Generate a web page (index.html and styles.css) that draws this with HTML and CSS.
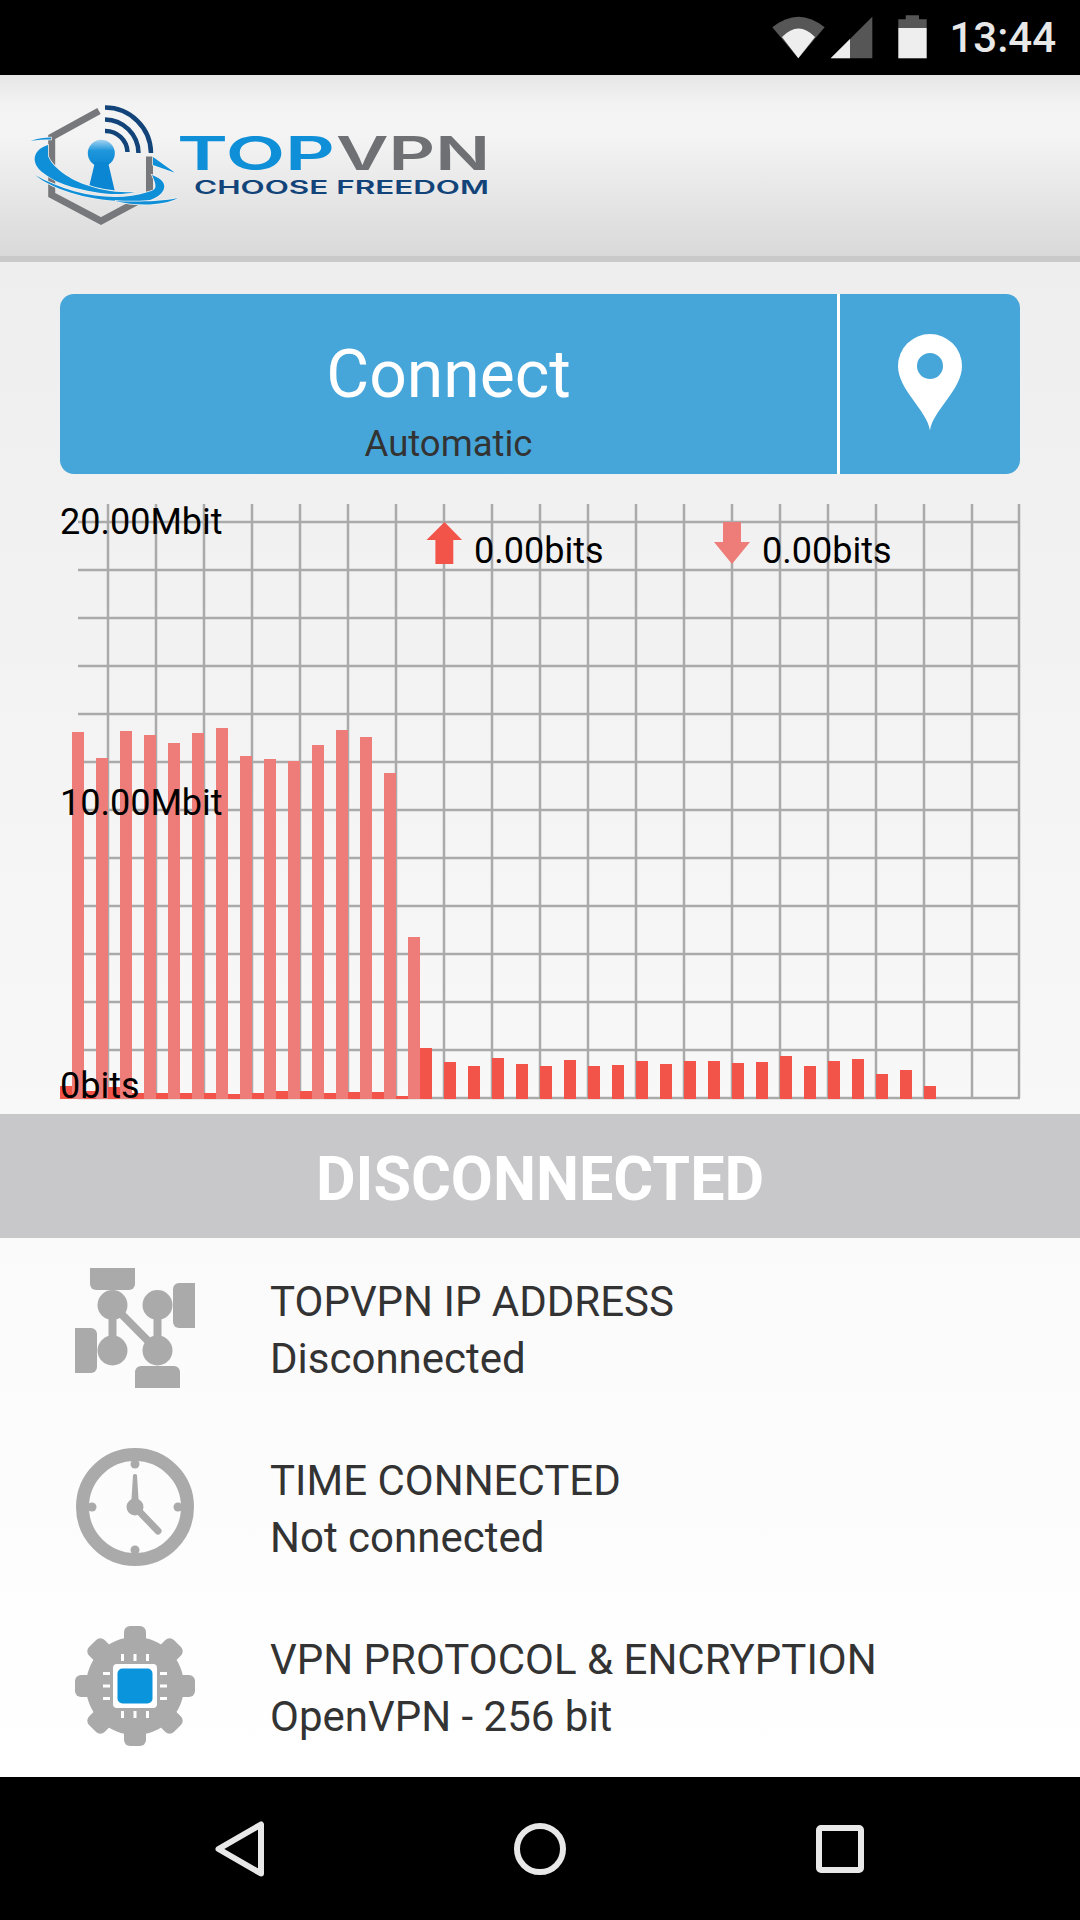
FILE: index.html
```html
<!DOCTYPE html>
<html lang="en">
<head>
  <meta charset="UTF-8">
  <meta name="viewport" content="width=device-width, initial-scale=1.0">
  <title>TopVPN</title>
  <link rel="stylesheet" href="styles.css">
</head>
<body>
  <div class="status">
    <svg class="status-icons" width="160" height="55" viewBox="770 10 160 55">
      <path class="dim" d="M773.3 27.3Q799.5 6 825.7 27.3L799.3 58.3Z"/>
      <path class="lit" d="M783 37Q799.5 20 816 37L799.3 58.3Z"/>
      <path class="dim" d="M831.7 58.3H873.3V16.7Z"/>
      <path class="lit" d="M831.7 58.3H851V39Z"/>
      <path class="dim" d="M906.7 15.3H920V19.3H927.7V28H899.3V19.3H906.7Z"/>
      <path class="lit" d="M899.3 28H927.7V58.3H899.3Z"/>
    </svg>
    <span class="clock">13:44</span>
  </div>

  <header class="topbar">
    <svg class="logo" width="520" height="181" viewBox="0 75 520 181">
      <defs>
        <linearGradient id="keyfill" x1="0" y1="0" x2="0" y2="1">
          <stop offset="0" stop-color="#a5d3f0"/>
          <stop offset="0.4" stop-color="#1f97dc"/>
          <stop offset="1" stop-color="#0a86d2"/>
        </linearGradient>
      </defs>
      <path class="logo-hex" d="M99 111L51.7 137V195L101 221L149.5 195V156.5"/>
      <path class="logo-wave" d="M105 107.5A46 46 0 0 1 151 153M105 119.5A34 34 0 0 1 138.500 153M105 131A22 22 0 0 1 127.500 152"/>
      <circle cx="101.300" cy="153.300" r="13.500" fill="url(#keyfill)"/>
      <path fill="#0a86d2" d="M95 162L89 187L115 192L108 162Z"/>
      <path class="logo-swoosh" d="M30.700 140.700C38 138.500 45 137.500 51 137.500V139.500C44 139.500 37 140 30.700 140.700Z"/>
      <path class="logo-swoosh" d="M48 145C32 150 31 163 42 172C52 180 62 184 72 187C90 192 115 197 135 192C115 193 100 190 83 184C68 178 52 167 48 156Z"/>
      <path class="logo-swoosh" d="M35 175C60 195 110 205 150 200C165 195 172 182 152 175C158 188 156 190 148 192C115 203 70 195 35 175Z"/>
      <path class="logo-swoosh" d="M115 201C140 207 165 205 178 198C160 202 130 202 115 201Z"/>
      <path class="logo-swoosh" d="M153 157L175 172.700L153 165Z"/>
      <text class="logo-top" x="177" y="170" textLength="158" lengthAdjust="spacingAndGlyphs">TOP</text>
      <text class="logo-vpn" x="336" y="170" textLength="154" lengthAdjust="spacingAndGlyphs">VPN</text>
      <text class="logo-sub" x="194" y="194" textLength="295" lengthAdjust="spacingAndGlyphs">CHOOSE FREEDOM</text>
    </svg>
  </header>

  <main class="main">
    <div class="connect">
      <div class="connect-main">
        <span class="connect-title">Connect</span>
        <span class="connect-sub">Automatic</span>
      </div>
      <div class="connect-pin">
        <svg class="pin-svg" width="66" height="98" viewBox="-33 -33 66 98">
          <path class="pin" fill-rule="evenodd" d="M0 64.500C-3 44 -32 24 -32 0A32 32 0 0 1 32 0C32 24 3 44 0 64.500ZM0 -13A13 13 0 0 0 0 13A13 13 0 0 0 0 -13Z"/>
        </svg>
      </div>
    </div>

    <div class="chart">
      <svg class="chart-svg" width="962" height="596" viewBox="60 504 962 596">
        <!-- grid -->
        <path class="grid" d="M78 522H1020M78 570H1020M78 618H1020M78 666H1020M78 714H1020M78 762H1020M78 810H1020M78 858H1020M78 906H1020M78 954H1020M78 1002H1020M78 1050H1020M78 1098H1020"/>
        <path class="grid" d="M108 504V1098M156 504V1098M204 504V1098M252 504V1098M300 504V1098M348 504V1098M396 504V1098M444 504V1098M492 504V1098M540 504V1098M588 504V1098M636 504V1098M684 504V1098M732 504V1098M780 504V1098M828 504V1098M876 504V1098M924 504V1098M972 504V1098M1019 504V1098"/>
        <!-- upload -->
        <g class="bars-up">
          <rect x="72" y="732" width="12" height="367"/>
          <rect x="96" y="758" width="12" height="341"/>
          <rect x="120" y="731" width="12" height="368"/>
          <rect x="144" y="735" width="12" height="364"/>
          <rect x="168" y="743" width="12" height="356"/>
          <rect x="192" y="733" width="12" height="366"/>
          <rect x="216" y="728" width="12" height="371"/>
          <rect x="240" y="756" width="12" height="343"/>
          <rect x="264" y="759" width="12" height="340"/>
          <rect x="288" y="761" width="12" height="338"/>
          <rect x="312" y="745" width="12" height="354"/>
          <rect x="336" y="730" width="12" height="369"/>
          <rect x="360" y="737" width="12" height="362"/>
          <rect x="384" y="773" width="12" height="326"/>
          <rect x="408" y="937" width="12" height="162"/>
        </g>
        <!-- download -->
        <g class="bars-down">
          <rect x="60" y="1086" width="12" height="13"/>
          <rect x="84" y="1091" width="12" height="8"/>
          <rect x="108" y="1087" width="12" height="12"/>
          <rect x="132" y="1093" width="12" height="6"/>
          <rect x="156" y="1093" width="12" height="6"/>
          <rect x="180" y="1093" width="12" height="6"/>
          <rect x="204" y="1093" width="12" height="6"/>
          <rect x="228" y="1094" width="12" height="5"/>
          <rect x="252" y="1093" width="12" height="6"/>
          <rect x="276" y="1091" width="12" height="8"/>
          <rect x="300" y="1091" width="12" height="8"/>
          <rect x="324" y="1093" width="12" height="6"/>
          <rect x="348" y="1092" width="12" height="7"/>
          <rect x="372" y="1092" width="12" height="7"/>
          <rect x="396" y="1096" width="12" height="3"/>
          <rect x="420" y="1048" width="12" height="51"/>
          <rect x="444" y="1062" width="12" height="37"/>
          <rect x="468" y="1066" width="12" height="33"/>
          <rect x="492" y="1058" width="12" height="41"/>
          <rect x="516" y="1064" width="12" height="35"/>
          <rect x="540" y="1066" width="12" height="33"/>
          <rect x="564" y="1060" width="12" height="39"/>
          <rect x="588" y="1066" width="12" height="33"/>
          <rect x="612" y="1065" width="12" height="34"/>
          <rect x="636" y="1061" width="12" height="38"/>
          <rect x="660" y="1064" width="12" height="35"/>
          <rect x="684" y="1061" width="12" height="38"/>
          <rect x="708" y="1061" width="12" height="38"/>
          <rect x="732" y="1063" width="12" height="36"/>
          <rect x="756" y="1062" width="12" height="37"/>
          <rect x="780" y="1056" width="12" height="43"/>
          <rect x="804" y="1066" width="12" height="33"/>
          <rect x="828" y="1061" width="12" height="38"/>
          <rect x="852" y="1059" width="12" height="40"/>
          <rect x="876" y="1074" width="12" height="25"/>
          <rect x="900" y="1070" width="12" height="29"/>
          <rect x="924" y="1086" width="12" height="13"/>
        </g>
        <path class="arrow-up" d="M444.500 522L462 540H453.300V564H435.400V540H426.500Z"/>
        <path class="arrow-down" d="M732 564L750 542H741V522H723V542H714Z"/>
      </svg>
      <span class="axis axis-top">20.00Mbit</span>
      <span class="axis axis-mid">10.00Mbit</span>
      <span class="axis axis-low">0bits</span>
      <span class="axis rate-up">0.00bits</span>
      <span class="axis rate-down">0.00bits</span>
    </div>
  </main>

  <div class="state">DISCONNECTED</div>

  <section class="info">
    <div class="row">
      <svg class="row-icon" width="120" height="120" viewBox="-60 -60 120 120">
        <path class="ico" d="M-45 -60H0V-44a6 6 0 0 1 -6 6H-39a6 6 0 0 1 -6 -6Z"/>
        <path class="ico" d="M60 -45V0H44a6 6 0 0 1 -6 -6V-39a6 6 0 0 1 6 -6Z"/>
        <path class="ico" d="M-60 0H-44a6 6 0 0 1 6 6V39a6 6 0 0 1 -6 6H-60Z"/>
        <path class="ico" d="M0 60V44a6 6 0 0 1 6 -6H39a6 6 0 0 1 6 6V60Z"/>
        <circle class="ico" cx="-22.500" cy="-23" r="15"/>
        <circle class="ico" cx="22.500" cy="-23" r="15"/>
        <circle class="ico" cx="-22.500" cy="22.500" r="15"/>
        <circle class="ico" cx="22.500" cy="22.500" r="15"/>
        <path class="ico-line" d="M-22.500 -23V22.500M22.500 -23V22.500M-22.500 -23L22.500 22.500"/>
      </svg>
      <div class="row-text">
        <div>TOPVPN IP ADDRESS</div>
        <div>Disconnected</div>
      </div>
    </div>
    <div class="row">
      <svg class="row-icon" width="120" height="120" viewBox="-60 -60 120 120">
        <circle class="ico-ring" r="52.500"/>
        <circle class="ico" cy="-43" r="4.500"/>
        <circle class="ico" cy="43" r="4.500"/>
        <circle class="ico" cx="-43" r="4.500"/>
        <circle class="ico" cx="43" r="4.500"/>
        <circle class="ico" r="8.500"/>
        <path class="ico" d="M-2 -32a2.500 2.500 0 0 1 4 0L4 0H-4Z"/>
        <path class="ico-hand" d="M0 0L23 24"/>
      </svg>
      <div class="row-text">
        <div>TIME CONNECTED</div>
        <div>Not connected</div>
      </div>
    </div>
    <div class="row">
      <svg class="row-icon" width="120" height="120" viewBox="-60 -60 120 120">
        <circle class="ico" r="49"/>
        <g class="ico">
          <rect x="-11" y="-60" width="22" height="30" rx="6"/>
          <rect x="-11" y="-60" width="22" height="30" rx="6" transform="rotate(45)"/>
          <rect x="-11" y="-60" width="22" height="30" rx="6" transform="rotate(90)"/>
          <rect x="-11" y="-60" width="22" height="30" rx="6" transform="rotate(135)"/>
          <rect x="-11" y="-60" width="22" height="30" rx="6" transform="rotate(180)"/>
          <rect x="-11" y="-60" width="22" height="30" rx="6" transform="rotate(225)"/>
          <rect x="-11" y="-60" width="22" height="30" rx="6" transform="rotate(270)"/>
          <rect x="-11" y="-60" width="22" height="30" rx="6" transform="rotate(315)"/>
        </g>
        <path class="chip-pins" d="M-12.500 -32V-25M0 -32V-25M12.500 -32V-25M-12.500 25V32M0 25V32M12.500 25V32M-32 -12.500H-25M-32 0H-25M-32 12.500H-25M25 -12.500H32M25 0H32M25 12.500H32"/>
        <rect class="chip-frame" x="-22" y="-22" width="44" height="44" rx="4"/>
        <rect class="chip-core" x="-17.500" y="-17.500" width="35" height="35" rx="5"/>
      </svg>
      <div class="row-text">
        <div>VPN PROTOCOL &amp; ENCRYPTION</div>
        <div>OpenVPN - 256 bit</div>
      </div>
    </div>
  </section>

  <nav class="navbar">
    <svg width="50" height="56" viewBox="0 0 50 56">
      <path class="nav-ico" d="M46 3.500V52.500L3.500 28Z"/>
    </svg>
    <svg width="54" height="54" viewBox="0 0 54 54">
      <circle class="nav-ico" cx="27" cy="27" r="23"/>
    </svg>
    <svg width="48" height="48" viewBox="0 0 48 48">
      <rect class="nav-ico" x="3" y="3" width="42" height="42" rx="2"/>
    </svg>
  </nav>
</body>
</html>
```

FILE: styles.css
```css
* {
  margin: 0;
  padding: 0;
  box-sizing: border-box;
}

body {
  width: 1080px;
  height: 1920px;
  overflow: hidden;
  display: flex;
  flex-direction: column;
  font-family: Roboto, "Liberation Sans", sans-serif;
  color: #333;
  background: #fafafa;
}

/* status bar */
.status {
  height: 75px;
  flex: none;
  display: flex;
  align-items: center;
  justify-content: flex-end;
  padding-right: 24px;
  background: #000;
}
.status-icons {
  display: block;
  margin-right: 20px;
}
.dim {
  fill: #565656;
}
.lit {
  fill: #eee;
}
.clock {
  font-size: 42px;
  font-weight: 500;
  color: #e8e8e8;
}

/* logo header */
.topbar {
  height: 181px;
  flex: none;
  background: linear-gradient(#e6e6e6 0, #f3f3f3 30px, #f4f4f4 60px, #d9d9d9 100%);
}
.logo {
  display: block;
}
.logo-hex {
  fill: none;
  stroke: #77787b;
  stroke-width: 7;
}
.logo-wave {
  fill: none;
  stroke: #12447a;
  stroke-width: 4.500;
}
.logo-swoosh {
  fill: #0f8fd8;
  stroke: #f0f0f0;
  stroke-width: 1.500;
  paint-order: stroke;
}
.logo-top,
.logo-vpn {
  font-family: Inter, sans-serif;
  font-size: 47px;
  font-weight: 600;
  fill: #0f8fd8;
}
.logo-vpn {
  fill: #6f7073;
}
.logo-sub {
  font-family: Inter, sans-serif;
  font-size: 18px;
  font-weight: 600;
  fill: #12447a;
}

/* connect button + chart */
.main {
  height: 858px;
  flex: none;
  padding: 32px 60px 0;
  border-top: 6px solid #c9c9c9;
  background: linear-gradient(#eee, #f8f8f8);
}
.connect {
  height: 180px;
  display: flex;
  border-radius: 14px;
  background: #46a6d9;
}
.connect-main {
  flex: 1;
  display: flex;
  flex-direction: column;
  align-items: center;
}
.connect-title {
  margin-top: 43px;
  font-size: 66px;
  line-height: 76px;
  color: #fff;
}
.connect-sub {
  margin-top: 10px;
  font-size: 36.500px;
  line-height: 42px;
}
.connect-pin {
  width: 183px;
  display: flex;
  align-items: center;
  justify-content: center;
  border-left: 3px solid #fff;
}
.pin-svg {
  margin-top: -4px;
}
.pin {
  fill: #fff;
}

.chart {
  position: relative;
  margin-top: 30px;
  width: 962px;
  height: 596px;
}
.chart-svg {
  display: block;
}
.grid {
  fill: none;
  stroke: #aaa;
  stroke-width: 2.500;
}
.bars-up,
.arrow-down {
  fill: #ee7c78;
}
.bars-down,
.arrow-up {
  fill: #f2544a;
}
.axis {
  position: absolute;
  font-size: 36px;
  line-height: 41px;
  color: #000;
}
.axis-top {
  left: 0;
  top: -2px;
}
.axis-mid {
  left: 0;
  top: 279px;
}
.axis-low {
  left: 0;
  top: 562px;
}
.rate-up {
  left: 414px;
  top: 27px;
}
.rate-down {
  left: 702px;
  top: 27px;
}

/* disconnected band */
.state {
  height: 124px;
  flex: none;
  display: flex;
  align-items: center;
  justify-content: center;
  padding-top: 5px;
  font-size: 61px;
  font-weight: 700;
  color: #fff;
  background: #c8c8ca;
}

/* info rows */
.info {
  flex: 1;
  padding-top: 2px;
  background: linear-gradient(#fafafa, #fff);
}
.row {
  height: 179px;
  display: flex;
  align-items: center;
  gap: 75px;
  padding-left: 75px;
}
.row-icon {
  display: block;
  margin-top: -3px;
}
.row-text {
  font-size: 42px;
  line-height: 57px;
}
.ico,
.ico g {
  fill: #aaa;
}
.ico-line {
  fill: none;
  stroke: #aaa;
  stroke-width: 8;
}
.ico-ring {
  fill: none;
  stroke: #aaa;
  stroke-width: 13;
}
.ico-hand {
  fill: none;
  stroke: #aaa;
  stroke-width: 7;
  stroke-linecap: round;
}
.chip-pins {
  fill: none;
  stroke: #fff;
  stroke-width: 3;
}
.chip-frame {
  fill: #fff;
}
.chip-core {
  fill: #0a94dc;
}

/* nav bar */
.navbar {
  height: 144px;
  flex: none;
  display: grid;
  grid-template-columns: repeat(3, 300px);
  justify-content: center;
  justify-items: center;
  align-items: center;
  background: #000;
}
.nav-ico {
  fill: none;
  stroke: #e8e8e8;
  stroke-width: 6;
  stroke-linejoin: round;
}
```
